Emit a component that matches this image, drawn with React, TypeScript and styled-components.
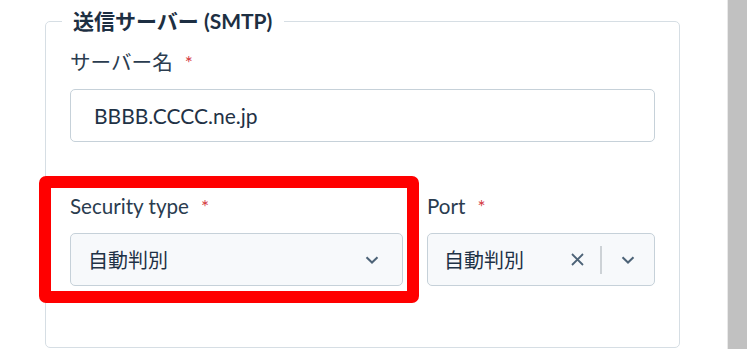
import React from 'react'
import styled, { createGlobalStyle } from 'styled-components'

const GlobalStyle = createGlobalStyle`
  html, body {
    margin: 0;
    padding: 0;
    background: #ffffff;
  }
  body {
    font-family: Lato, "Noto Sans CJK JP", sans-serif;
    color: #1f3246;
  }
`

const Page = styled.div`
  display: flex;
  height: 349px;
  overflow: hidden;
`

const Main = styled.div`
  flex: 1;
  padding: 2px 47px 0 45px;
`

const Scrollbar = styled.div`
  width: 21px;
  background: #c1c1c1;
  border-left: 1px solid #e9e9e9;
`

const Fieldset = styled.fieldset`
  margin: 0;
  padding: 0 24px 60px;
  height: 346px;
  box-sizing: border-box;
  border: 1px solid #d6dee4;
  border-radius: 5px;
`

const Legend = styled.legend`
  margin-left: -8px;
  padding: 0 12px 0 11px;
  font-size: 21px;
  font-weight: 700;
  line-height: 38px;
  color: #1d2f42;
`

const Grid = styled.div<{ columns: string }>`
  display: grid;
  grid-template-columns: ${p => p.columns};
  column-gap: 24px;
  margin-top: ${p => (p.columns === '1fr' ? '8px' : '0')};
  margin-bottom: 50px;
  &:last-child {
    margin-bottom: 0;
  }
`

const Field = styled.div`
  position: relative;
  display: flex;
  flex-direction: column;
  gap: 12px;
`

const Label = styled.div`
  font-size: 20.6px;
  line-height: 28px;
  color: #2a3c4f;
`

const Required = styled.span`
  color: #d43a3f;
  margin-left: 12px;
  font-size: 19px;
`

const Input = styled.div`
  height: 53px;
  box-sizing: border-box;
  border: 1px solid #c6d1d9;
  border-radius: 5px;
  background: #ffffff;
  display: flex;
  align-items: center;
  padding-left: 23px;
  font-size: 21px;
  color: #1f3246;
`

const Select = styled.div<{ pad: number }>`
  height: 53px;
  box-sizing: border-box;
  border: 1px solid #c6d1d9;
  border-radius: 5px;
  background: #f7f9fb;
  display: flex;
  align-items: center;
  padding-left: ${p => p.pad}px;
  font-size: 20px;
  color: #1f3246;
`

const Value = styled.span`
  flex: 1;
`

const IconBox = styled.span<{ w: number }>`
  width: ${p => p.w}px;
  display: flex;
  align-items: center;
  justify-content: center;
`

const Divider = styled.span`
  width: 2px;
  height: 28px;
  background: #cdd2d6;
`

const Highlight = styled.div`
  position: absolute;
  left: -31px;
  right: -16px;
  top: -16px;
  bottom: -17px;
  border: 12px solid #ff0000;
  border-radius: 7px;
  pointer-events: none;
`

const Chevron = () => (
  <svg width="14" height="8" viewBox="0 0 14 8">
    <polyline points="1.5,1.2 7,6.5 12.5,1.2" fill="none" stroke="#4d6377" strokeWidth="2" />
  </svg>
)

const Cross = () => (
  <svg width="13" height="13" viewBox="0 0 13 13">
    <path d="M1 1 L12 12 M12 1 L1 12" fill="none" stroke="#4d6377" strokeWidth="1.8" />
  </svg>
)

export default function App() {
  return (
    <>
      <GlobalStyle />
      <Page>
        <Main>
          <Fieldset>
            <Legend>送信サーバー (SMTP)</Legend>
            <Grid columns="1fr">
              <Field>
                <Label>
                  サーバー名<Required>*</Required>
                </Label>
                <Input>BBBB.CCCC.ne.jp</Input>
              </Field>
            </Grid>
            <Grid columns="333px 228px">
              <Field>
                <Label>
                  Security type<Required>*</Required>
                </Label>
                <Select pad={17}>
                  <Value>自動判別</Value>
                  <IconBox w={60}>
                    <Chevron />
                  </IconBox>
                </Select>
                <Highlight />
              </Field>
              <Field>
                <Label>
                  Port<Required>*</Required>
                </Label>
                <Select pad={16}>
                  <Value>自動判別</Value>
                  <IconBox w={46}>
                    <Cross />
                  </IconBox>
                  <Divider />
                  <IconBox w={52}>
                    <Chevron />
                  </IconBox>
                </Select>
              </Field>
            </Grid>
          </Fieldset>
        </Main>
        <Scrollbar />
      </Page>
    </>
  )
}
